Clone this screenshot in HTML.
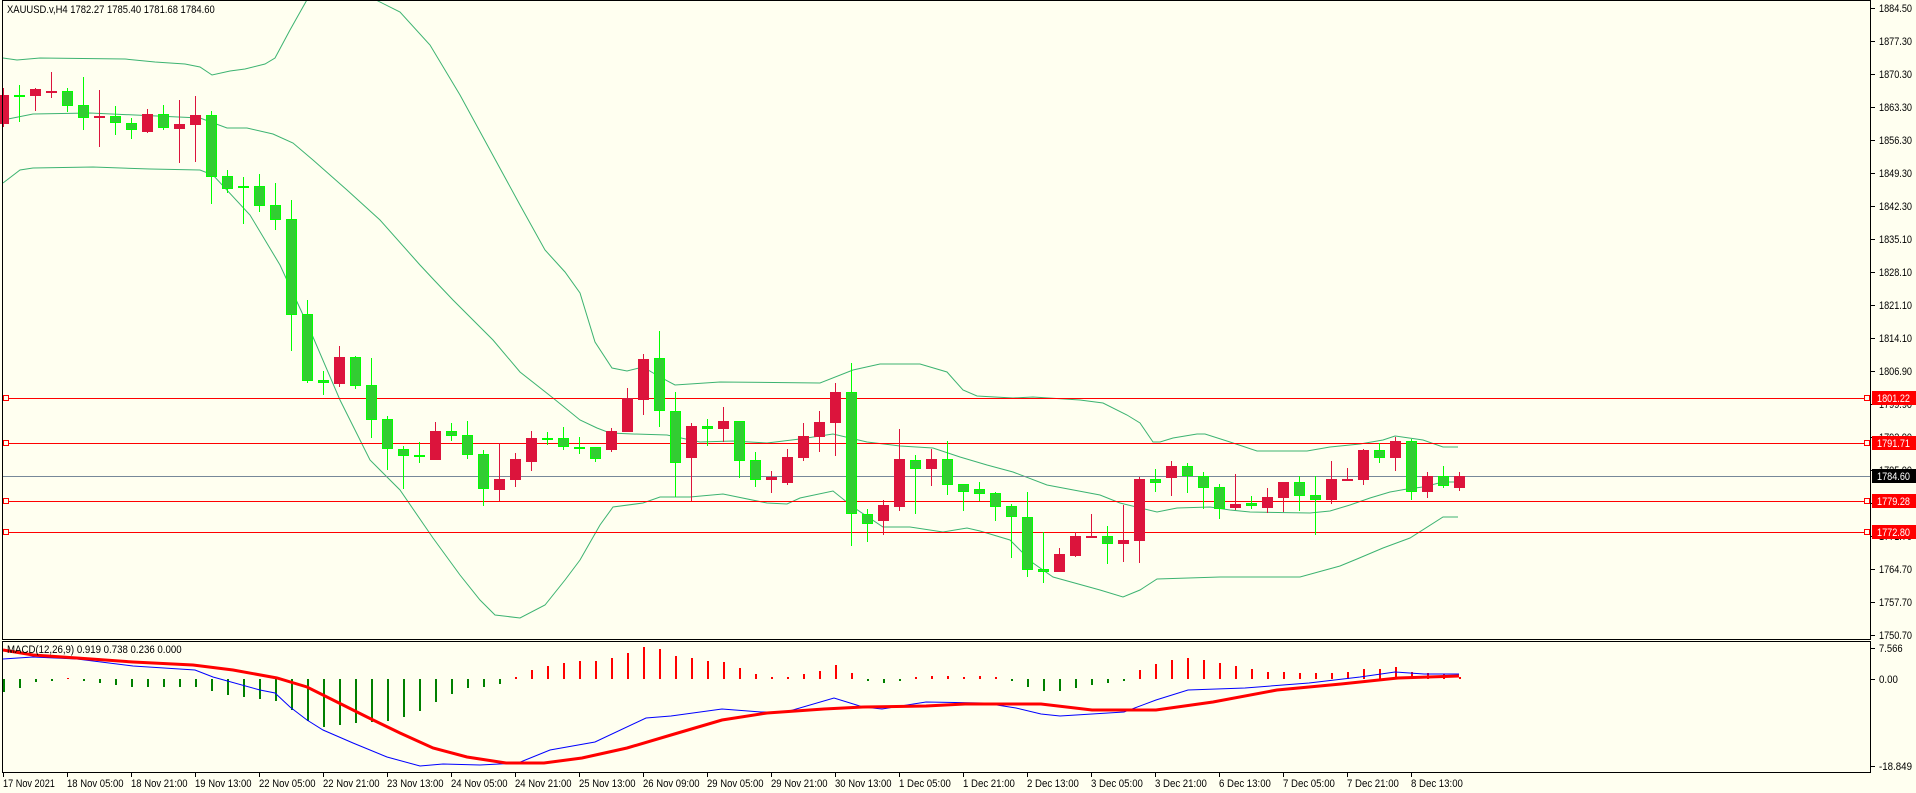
<!DOCTYPE html>
<html><head><meta charset="utf-8"><style>
html,body{margin:0;padding:0;background:#FFFFF0;}
body{width:1916px;height:793px;overflow:hidden;}
svg{display:block;font-family:"Liberation Sans",sans-serif;font-size:11px;}
</style></head><body>
<svg id="s" width="1916" height="793" xmlns="http://www.w3.org/2000/svg">
<rect x="0" y="0" width="1916" height="793" fill="#FFFFF0"/>
<g id="bands" fill="none" stroke="#3CB371" stroke-width="1"></g>
<g id="hist"></g>
<g id="macd" fill="none"></g>
<g id="lvl"></g>
<g id="cdl"></g>
<g stroke="#000" stroke-width="1" fill="none" shape-rendering="crispEdges">
<path d="M2.5 0.5 H1870.5 V639.5 H2.5 Z"/>
<path d="M2.5 641.5 H1870.5 V772.5 H2.5 Z"/>
</g>
<g id="ax" font-size="11" fill="#000"></g>
<text x="7" y="13" font-size="11" fill="#000">XAUUSD.v,H4  1782.27 1785.40 1781.68 1784.60</text>
<text x="7" y="653" font-size="11" fill="#000">MACD(12,26,9) 0.919 0.738 0.236 0.000</text>
<g font-size="11" fill="#000">
<text x="1879" y="652">7.566</text>
<text x="1879" y="683">0.00</text>
<text x="1879" y="770">-18.849</text>
</g>
<g font-size="11" fill="#000" id="tl">
<text x="3" y="787">17 Nov 2021</text>
<text x="67" y="787">18 Nov 05:00</text>
<text x="131" y="787">18 Nov 21:00</text>
<text x="195" y="787">19 Nov 13:00</text>
<text x="259" y="787">22 Nov 05:00</text>
<text x="323" y="787">22 Nov 21:00</text>
<text x="387" y="787">23 Nov 13:00</text>
<text x="451" y="787">24 Nov 05:00</text>
<text x="515" y="787">24 Nov 21:00</text>
<text x="579" y="787">25 Nov 13:00</text>
<text x="643" y="787">26 Nov 09:00</text>
<text x="707" y="787">29 Nov 05:00</text>
<text x="771" y="787">29 Nov 21:00</text>
<text x="835" y="787">30 Nov 13:00</text>
<text x="899" y="787">1 Dec 05:00</text>
<text x="963" y="787">1 Dec 21:00</text>
<text x="1027" y="787">2 Dec 13:00</text>
<text x="1091" y="787">3 Dec 05:00</text>
<text x="1155" y="787">3 Dec 21:00</text>
<text x="1219" y="787">6 Dec 13:00</text>
<text x="1283" y="787">7 Dec 05:00</text>
<text x="1347" y="787">7 Dec 21:00</text>
<text x="1411" y="787">8 Dec 13:00</text>
</g>
<g id="px" font-size="11" fill="#000">
<text x="1879" y="12">1884.50</text>
<text x="1879" y="45">1877.30</text>
<text x="1879" y="78">1870.30</text>
<text x="1879" y="111">1863.30</text>
<text x="1879" y="144">1856.30</text>
<text x="1879" y="177">1849.30</text>
<text x="1879" y="210">1842.30</text>
<text x="1879" y="243">1835.10</text>
<text x="1879" y="276">1828.10</text>
<text x="1879" y="309">1821.10</text>
<text x="1879" y="342">1814.10</text>
<text x="1879" y="375">1806.90</text>
<text x="1879" y="408">1799.90</text>
<text x="1879" y="441">1792.90</text>
<text x="1879" y="474">1785.90</text>
<text x="1879" y="507">1778.70</text>
<text x="1879" y="540">1771.70</text>
<text x="1879" y="573">1764.70</text>
<text x="1879" y="606">1757.70</text>
<text x="1879" y="639">1750.70</text>
</g>
<g id="boxes" font-size="11"></g>
</svg>
<script>
var NS="http://www.w3.org/2000/svg";
function el(p,t,a,txt){var e=document.createElementNS(NS,t);for(var k in a)e.setAttribute(k,a[k]);if(txt)e.textContent=txt;document.getElementById(p).appendChild(e);return e;}
function pl(p,pts,st,w){el(p,"polyline",{points:pts.map(function(q){return q.join(",")}).join(" "),stroke:st,"stroke-width":w,fill:"none"});}
var up=[[3,58],[17,60],[40,58],[125,59],[155,62],[185,64],[200,67],[212,75],[230,71],[245,69],[265,64],[275,58],[290,30],[308,-2],[372,-2],[400,12],[430,45],[460,95],[490,150],[520,205],[545,250],[565,272],[580,293],[595,342],[612,368],[627,371],[643,367],[660,377],[675,385],[720,382],[820,383],[853,370],[880,364],[920,364],[947,372],[963,390],[977,396],[1013,398],[1033,397],[1080,400],[1103,403],[1127,415],[1140,423],[1153,442],[1160,442],[1173,438],[1197,434],[1205,434],[1230,442],[1257,451],[1307,451],[1330,447],[1360,444],[1383,440],[1395,436],[1423,440],[1443,447],[1458,447]];
var mid=[[3,120],[33,114],[90,113],[200,118],[227,128],[247,128],[273,134],[293,143],[313,160],[347,190],[380,220],[420,265],[434,280],[453,300],[493,340],[520,372],[553,398],[580,420],[597,428],[610,433],[633,434],[667,435],[700,442],[733,441],[767,443],[800,439],[833,434],[867,442],[900,446],[933,448],[960,457],[987,465],[1013,472],[1047,485],[1100,495],[1120,503],[1157,512],[1177,508],[1210,507],[1230,510],[1250,512],[1310,513],[1330,511],[1350,505],[1370,498],[1390,492],[1407,489],[1423,487],[1443,482],[1458,482]];
var lo=[[3,183],[20,170],[33,168],[93,167],[150,169],[200,170],[213,175],[250,215],[280,265],[310,330],[340,400],[370,460],[400,490],[433,538],[460,575],[480,600],[495,615],[520,618],[545,605],[565,580],[580,560],[600,525],[613,507],[643,503],[660,497],[690,497],[723,494],[767,503],[787,504],[800,498],[833,491],[853,507],[883,527],[910,527],[943,532],[967,528],[980,531],[1010,540],[1033,563],[1053,577],[1100,590],[1123,597],[1140,590],[1157,579],[1220,577],[1300,577],[1340,566],[1357,559],[1383,548],[1410,538],[1443,517],[1458,517]];
pl("bands",up,"#3CB371",1);pl("bands",mid,"#3CB371",1);pl("bands",lo,"#3CB371",1);
[[398,"1801.22"],[443,"1791.71"],[501,"1779.28"],[532,"1772.80"]].forEach(function(l){
 el("lvl","rect",{x:3,y:l[0],width:1867,height:1,fill:"#FF0000"});
 el("lvl","rect",{x:3.5,y:l[0]-2.5,width:5,height:5,fill:"#FFFFF0",stroke:"#FF0000"});
 el("lvl","rect",{x:1864.5,y:l[0]-2.5,width:5,height:5,fill:"#FFFFF0",stroke:"#FF0000"});
 el("boxes","rect",{x:1872,y:l[0]-7,width:44,height:14,fill:"#FF0000"});
 el("boxes","text",{x:1877,y:l[0]+4,fill:"#fff"},l[1]);
});
el("lvl","rect",{x:3,y:476,width:1867,height:1,fill:"#778899"});
el("boxes","rect",{x:1872,y:469,width:44,height:14,fill:"#000"});
el("boxes","text",{x:1877,y:480,fill:"#fff"},"1784.60");
for(var i=0;i<20;i++){el("ax","rect",{x:1871,y:8+i*33,width:4,height:1,fill:"#000"});}
[648,679,766].forEach(function(y){el("ax","rect",{x:1871,y:y,width:4,height:1,fill:"#000"});});
for(var i=0;i<23;i++){el("ax","rect",{x:3+64*i,y:773,width:1,height:4,fill:"#000"});}
var C=[["r",88,95,124,127],["g",85,95,96,122],["r",88,89,96,111],["r",72,91,92,98],["g",88,91,106,112],["g",77,105,118,130],["r",90,116,118,147],["g",106,116,123,135],["g",118,123,130,139],["r",109,114,132,133],["g",105,114,128,130],["r",100,124,129,163],["r",96,115,125,162],["g",111,115,177,204],["g",170,176,189,193],["g",177,186,187,224],["g",174,186,206,212],["g",183,205,220,230],["g",200,219,315,351],["g",300,314,381,383],["g",371,380,383,395],["r",346,357,384,387],["g",356,357,386,389],["g",358,385,420,438],["g",416,419,449,470],["g",446,449,456,489],["g",442,455,457,463],["r",422,431,460,460],["g",423,431,436,441],["g",421,435,455,459],["g",450,454,489,506],["r",443,479,490,501],["r",453,459,480,487],["r",431,438,462,471],["g",432,438,439,445],["g",427,438,447,450],["g",437,447,448,454],["g",447,447,459,462],["r",428,431,450,452],["r",388,398,432,432],["r",354,359,400,415],["g",331,358,411,427],["g",392,411,463,497],["r",423,426,458,501],["g",419,426,429,446],["r",407,421,429,442],["g",421,421,461,478],["g",452,460,480,487],["r",471,477,480,493],["r",449,457,483,485],["r",423,436,458,461],["r",411,422,437,452],["r",383,392,423,456],["g",363,392,514,546],["g",509,514,524,542],["r",500,505,521,535],["r",429,459,507,511],["g",455,460,469,514],["r",449,459,469,486],["g",441,459,485,495],["g",484,484,492,511],["g",482,489,494,501],["g",492,493,507,521],["g",504,506,517,558],["g",492,517,570,577],["g",532,569,572,583],["r",548,554,572,572],["r",532,536,556,557],["r",514,536,537,538],["g",526,536,544,564],["r",505,540,544,562],["r",477,479,541,563],["g",469,479,483,492],["r",461,466,478,496],["g",463,466,476,493],["g",472,476,488,509],["g",484,487,509,519],["r",474,504,508,510],["g",496,503,506,509],["r",488,497,508,513],["r",482,482,498,512],["g",476,482,496,511],["g",476,495,500,535],["r",461,479,500,504],["r",468,479,480,481],["r",449,450,480,485],["g",443,450,458,463],["r",437,441,458,471],["g",439,441,492,500],["r",472,476,492,498],["g",466,476,486,488],["r",472,476,488,491]];
C.forEach(function(c,i){
 var cx=3+16*i, g=c[0]=="g";
 var wc=g?"#00FF00":"#DC143C";
 el("cdl","rect",{x:cx,y:c[1],width:1,height:Math.max(1,c[4]-c[1]),fill:wc});
 var h=Math.max(1,c[3]-c[2]);
 if(h<=2){el("cdl","rect",{x:cx-5,y:c[2],width:11,height:2,fill:wc});}
 else if(g){el("cdl","rect",{x:cx-4.5,y:c[2]+0.5,width:10,height:h-1,fill:"#32CD32",stroke:"#00FF00"});}
 else{el("cdl","rect",{x:cx-5,y:c[2],width:11,height:h,fill:"#DC143C"});}
});
var H=[692,688,682,681,678,681,683,685,687,687,687,687,687,691,695,697,699,701,710,721,727,725,723,722,721,717,711,702,694,688,687,684,677,670,666,663,661,661,658,653,647,649,656,658,661,662,668,674,677,677,674,671,665,673,681,683,681,677,676,676,677,676,677,681,687,691,691,688,685,683,681,670,664,660,658,660,663,666,669,672,672,673,673,673,672,669,669,667,672,673,674,677];
H.forEach(function(y,i){var cx=3+16*i;
 if(y>679)el("hist","rect",{x:cx,y:679,width:2,height:y-679,fill:"#008000"});
 else el("hist","rect",{x:cx,y:y,width:2,height:Math.max(1,679-y),fill:"#FF0000"});
});
var blue=[[3,659],[33,657],[77,659],[133,666],[195,670],[213,677],[260,690],[275,693],[290,707],[307,720],[323,730],[353,743],[387,757],[420,766],[443,764],[480,765],[518,763],[550,750],[595,742],[646,718],[671,716],[722,709],[761,712],[786,712],[834,698],[863,707],[882,709],[926,702],[984,703],[1016,708],[1041,714],[1060,716],[1124,712],[1156,700],[1188,690],[1245,688],[1309,683],[1360,677],[1395,672],[1424,674],[1459,674]];
var red=[[3,650],[33,655],[77,658],[133,662],[193,665],[233,670],[277,678],[307,687],[333,700],[367,717],[400,733],[433,748],[467,757],[506,763],[544,763],[582,758],[627,748],[671,735],[722,720],[767,713],[824,709],[863,707],[926,706],[965,704],[1041,704],[1092,710],[1156,710],[1213,702],[1277,690],[1341,684],[1398,678],[1459,676]];
pl("macd",blue,"#0000FF",1);pl("macd",red,"#FF0000",3);
// fit text widths to Tahoma-like metrics
var ts=document.getElementsByTagName("text");
for(var i=0;i<ts.length;i++){var t=ts[i];var n=t.textContent.length;
 t.setAttribute("textLength",(n*4.72).toFixed(1));t.setAttribute("lengthAdjust","spacingAndGlyphs");}
</script>
</body></html>
